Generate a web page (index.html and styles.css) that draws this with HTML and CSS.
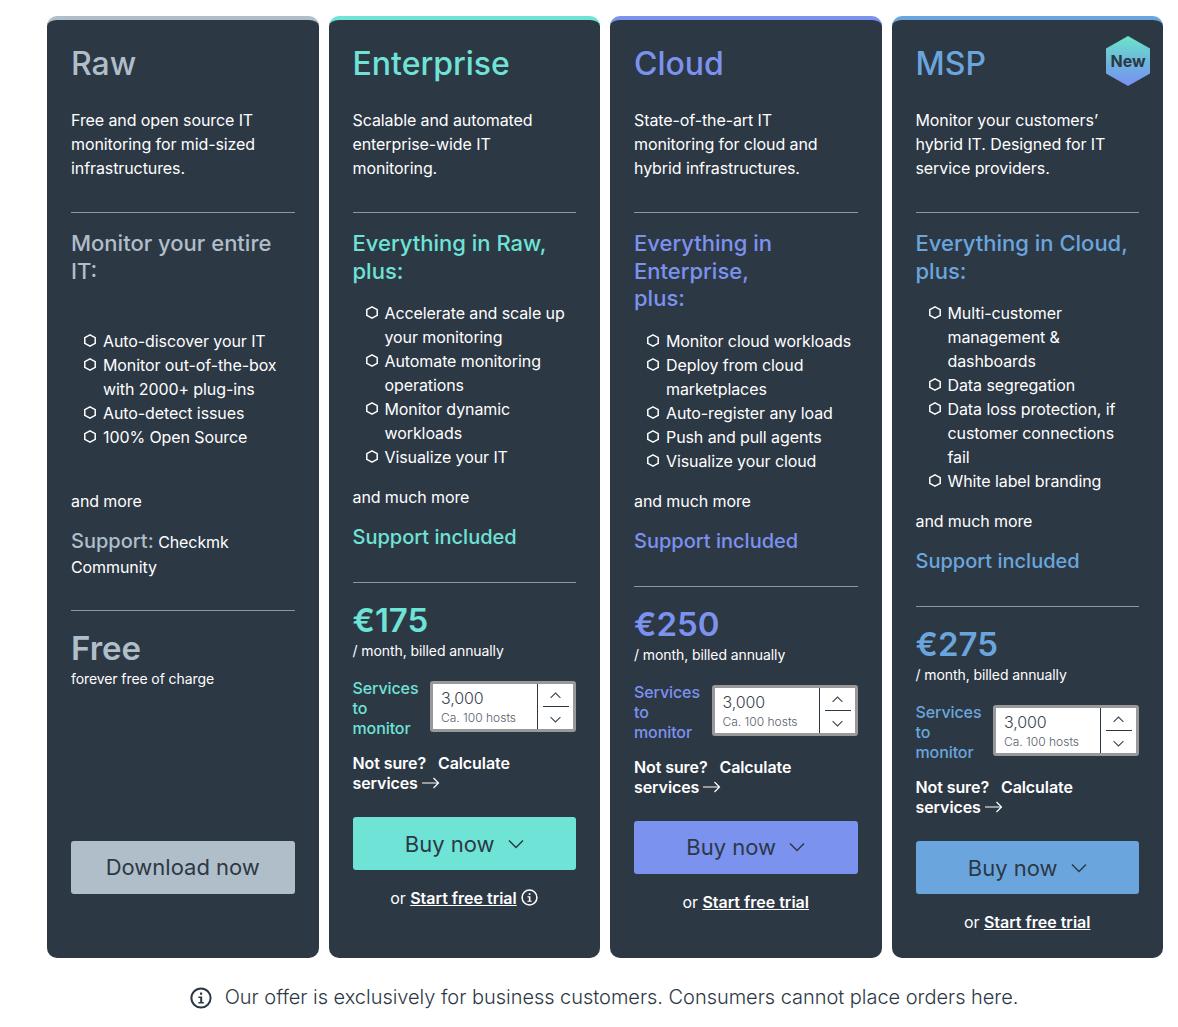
FILE: index.html
```html
<!DOCTYPE html>
<html lang="en">
<head>
    <meta charset="UTF-8">
    <meta name="viewport" content="width=device-width, initial-scale=1.0">
    <title>Checkmk pricing</title>
    <link rel="stylesheet" href="styles.css">
</head>
<body>
    <svg class="sprites" width="0" height="0" aria-hidden="true">
        <defs>
            <symbol id="hex" viewBox="0 0 12 13">
                <path d="M6 .8 11.2 3.6V9.4L6 12.2 .8 9.4V3.6Z" fill="none" stroke="currentColor" stroke-width="1.5" stroke-linejoin="round"/>
            </symbol>
            <symbol id="chev" viewBox="0 0 16 10">
                <path d="M1 1.5 8 8.5 15 1.5" fill="none" stroke="currentColor" stroke-width="1.5"/>
            </symbol>
            <symbol id="arrow" viewBox="0 0 18 12">
                <path d="M0 6H16.5M11.5 1 16.5 6 11.5 11" fill="none" stroke="currentColor" stroke-width="1.2"/>
            </symbol>
            <symbol id="info" viewBox="0 0 22 22">
                <circle cx="11" cy="11" r="9.6" fill="none" stroke="currentColor" stroke-width="2"/>
                <path d="M10 5.4h2.2v2.3h-2.2zM8.4 9.5h3.8v5.6h1.6v1.5H8.4v-1.5h1.8V11H8.4z" fill="currentColor"/>
            </symbol>
            <linearGradient id="newGrad" x1="0" y1="0" x2="0" y2="1">
                <stop offset="0" stop-color="#6ee3c8"/>
                <stop offset="0.55" stop-color="#6cb4de"/>
                <stop offset="1" stop-color="#7c8ff5"/>
            </linearGradient>
        </defs>
    </svg>

    <div class="plans">
        <!-- Raw -->
        <section class="card card-raw">
            <h2>Raw</h2>
            <p class="desc">Free and open source IT monitoring for mid-sized infrastructures.</p>
            <hr>
            <h3>Monitor your entire IT:<br><br></h3>
            <ul class="features features-raw">
                <li><svg class="hex"><use href="#hex"/></svg><span>Auto-discover your IT</span></li>
                <li><svg class="hex"><use href="#hex"/></svg><span>Monitor out-of-the-box with 2000+ plug-ins</span></li>
                <li><svg class="hex"><use href="#hex"/></svg><span>Auto-detect issues</span></li>
                <li><svg class="hex"><use href="#hex"/></svg><span>100% Open Source</span></li>
            </ul>
            <p class="more">and more</p>
            <p class="support"><strong>Support:</strong> Checkmk Community</p>
            <hr>
            <div class="price">Free</div>
            <div class="period">forever free of charge</div>
            <a class="btn btn-download" href="#">Download now</a>
        </section>

        <!-- Enterprise -->
        <section class="card card-enterprise">
            <h2>Enterprise</h2>
            <p class="desc">Scalable and automated enterprise-wide IT monitoring.</p>
            <hr>
            <h3>Everything in Raw, plus:</h3>
            <ul class="features">
                <li><svg class="hex"><use href="#hex"/></svg><span>Accelerate and scale up your monitoring</span></li>
                <li><svg class="hex"><use href="#hex"/></svg><span>Automate monitoring operations</span></li>
                <li><svg class="hex"><use href="#hex"/></svg><span>Monitor dynamic workloads</span></li>
                <li><svg class="hex"><use href="#hex"/></svg><span>Visualize your IT</span></li>
            </ul>
            <p class="more">and much more</p>
            <p class="support"><strong>Support included</strong></p>
            <hr>
            <div class="price">€175</div>
            <div class="period">/ month, billed annually</div>
            <div class="services">
                <label class="services-label">Services to monitor</label>
                <div class="stepper">
                    <div class="stepper-value">
                        <span class="stepper-num">3,000</span>
                        <span class="stepper-hint">Ca. 100 hosts</span>
                    </div>
                    <div class="stepper-btns">
                        <svg class="step-up"><use href="#chev"/></svg>
                        <svg class="step-down"><use href="#chev"/></svg>
                    </div>
                </div>
            </div>
            <p class="calc">Not sure? <a href="#">Calculate services <svg class="arrow"><use href="#arrow"/></svg></a></p>
            <a class="btn" href="#">Buy now <svg class="btn-chev"><use href="#chev"/></svg></a>
            <p class="trial">or <a href="#">Start free trial</a> <svg class="trial-info"><use href="#info"/></svg></p>
        </section>

        <!-- Cloud -->
        <section class="card card-cloud">
            <h2>Cloud</h2>
            <p class="desc">State-of-the-art IT monitoring for cloud and hybrid infrastructures.</p>
            <hr>
            <h3>Everything in Enterprise,<br>plus:</h3>
            <ul class="features">
                <li><svg class="hex"><use href="#hex"/></svg><span>Monitor cloud workloads</span></li>
                <li><svg class="hex"><use href="#hex"/></svg><span>Deploy from cloud marketplaces</span></li>
                <li><svg class="hex"><use href="#hex"/></svg><span>Auto-register any load</span></li>
                <li><svg class="hex"><use href="#hex"/></svg><span>Push and pull agents</span></li>
                <li><svg class="hex"><use href="#hex"/></svg><span>Visualize your cloud</span></li>
            </ul>
            <p class="more">and much more</p>
            <p class="support"><strong>Support included</strong></p>
            <hr>
            <div class="price">€250</div>
            <div class="period">/ month, billed annually</div>
            <div class="services">
                <label class="services-label">Services to monitor</label>
                <div class="stepper">
                    <div class="stepper-value">
                        <span class="stepper-num">3,000</span>
                        <span class="stepper-hint">Ca. 100 hosts</span>
                    </div>
                    <div class="stepper-btns">
                        <svg class="step-up"><use href="#chev"/></svg>
                        <svg class="step-down"><use href="#chev"/></svg>
                    </div>
                </div>
            </div>
            <p class="calc">Not sure? <a href="#">Calculate services <svg class="arrow"><use href="#arrow"/></svg></a></p>
            <a class="btn" href="#">Buy now <svg class="btn-chev"><use href="#chev"/></svg></a>
            <p class="trial">or <a href="#">Start free trial</a></p>
        </section>

        <!-- MSP -->
        <section class="card card-msp">
            <div class="badge">
                <svg class="badge-hex" viewBox="0 0 44 50"><path d="M22 0 44 12.5V37.5L22 50 0 37.5V12.5Z" fill="url(#newGrad)"/></svg>
                <span class="badge-text">New</span>
            </div>
            <h2>MSP</h2>
            <p class="desc">Monitor your customers’ hybrid IT. Designed for IT service providers.</p>
            <hr>
            <h3>Everything in Cloud, plus:</h3>
            <ul class="features">
                <li><svg class="hex"><use href="#hex"/></svg><span>Multi-customer management &amp; dashboards</span></li>
                <li><svg class="hex"><use href="#hex"/></svg><span>Data segregation</span></li>
                <li><svg class="hex"><use href="#hex"/></svg><span>Data loss protection, if customer connections fail</span></li>
                <li><svg class="hex"><use href="#hex"/></svg><span>White label branding</span></li>
            </ul>
            <p class="more">and much more</p>
            <p class="support"><strong>Support included</strong></p>
            <hr>
            <div class="price">€275</div>
            <div class="period">/ month, billed annually</div>
            <div class="services">
                <label class="services-label">Services to monitor</label>
                <div class="stepper">
                    <div class="stepper-value">
                        <span class="stepper-num">3,000</span>
                        <span class="stepper-hint">Ca. 100 hosts</span>
                    </div>
                    <div class="stepper-btns">
                        <svg class="step-up"><use href="#chev"/></svg>
                        <svg class="step-down"><use href="#chev"/></svg>
                    </div>
                </div>
            </div>
            <p class="calc">Not sure? <a href="#">Calculate services <svg class="arrow"><use href="#arrow"/></svg></a></p>
            <a class="btn" href="#">Buy now <svg class="btn-chev"><use href="#chev"/></svg></a>
            <p class="trial">or <a href="#">Start free trial</a></p>
        </section>
    </div>

    <p class="notice"><svg class="notice-info"><use href="#info"/></svg>Our offer is exclusively for business customers. Consumers cannot place orders here.</p>
</body>
</html>
```

FILE: styles.css
```css
* {
    box-sizing: border-box;
}

body {
    margin: 0;
    background: #fff;
    font-family: "Inter", "Liberation Sans", sans-serif;
    font-size: 16px;
    line-height: 24px;
    letter-spacing: -0.09px;
    color: #fff;
}

.sprites {
    position: absolute;
}

.plans {
    display: grid;
    grid-template-columns: repeat(4, 1fr);
    gap: 10px;
    padding: 16px 15px 0 47px;
}

.card {
    position: relative;
    display: flex;
    flex-direction: column;
    align-items: stretch;
    padding: 20px 24px 24px;
    background: #2d3845;
    border-top: 4px solid var(--accent);
    border-radius: 10px;
}

.card-raw { --accent: #b0bec9; }
.card-enterprise { --accent: #6ee3d6; }
.card-cloud { --accent: #7c92ef; }
.card-msp { --accent: #6aa6dd; }

h2 {
    margin: 0 0 20px;
    font-size: 32px;
    line-height: 48px;
    font-weight: 500;
    letter-spacing: 0;
    color: var(--accent);
}

.desc {
    margin: 0 0 32px;
    padding-right: 4px;
}

hr {
    width: 100%;
    height: 1px;
    margin: 0 0 17px;
    border: 0;
    background: #8f969e;
}

h3 {
    margin: 0 0 16px;
    font-size: 22px;
    line-height: 27.5px;
    font-weight: 500;
    letter-spacing: 0;
    color: var(--accent);
}

.features {
    margin: 0 0 16px;
    padding: 0 0 0 13px;
    list-style: none;
}

.features-raw {
    margin-bottom: 40px;
}

.features li {
    display: flex;
    gap: 7px;
}

.hex {
    flex: none;
    width: 12px;
    height: 13px;
    margin-top: 5px;
    color: #fff;
}

.more {
    margin: 0 0 15px;
}

.support {
    margin: 0 0 31px;
}

.support strong {
    font-size: 20px;
    line-height: 27px;
    font-weight: 500;
    letter-spacing: 0;
    color: var(--accent);
}

.price {
    font-size: 33px;
    line-height: 40px;
    font-weight: 600;
    letter-spacing: 0;
    color: var(--accent);
}

.period {
    font-size: 14px;
    line-height: 20px;
    margin-top: 1px;
}

.services {
    display: flex;
    align-items: flex-start;
    gap: 10px;
    margin-top: 17px;
}

.services-label {
    flex: 1;
    font-weight: 500;
    line-height: 20px;
    color: var(--accent);
}

.stepper {
    flex: none;
    display: flex;
    width: 146px;
    height: 51px;
    margin-top: 3px;
    background: #fff;
    border: 3px solid #999;
    border-radius: 3px;
    color: #3b4450;
}

.stepper-value {
    flex: 1;
    display: flex;
    flex-direction: column;
    padding: 2px 0 0 8px;
    border-right: 1px solid #2d3845;
}

.stepper-num {
    font-weight: 300;
    line-height: 24px;
}

.stepper-hint {
    font-size: 12px;
    line-height: 16px;
    font-weight: 300;
    letter-spacing: 0;
    color: #56616c;
}

.stepper-btns {
    position: relative;
    width: 35px;
    display: flex;
    flex-direction: column;
    align-items: center;
}

.step-up,
.step-down {
    width: 13px;
    height: 7px;
}

.step-up {
    transform: scaleY(-1);
    margin-top: 8px;
}

.step-down {
    margin-top: 17px;
}

/* line between the two step buttons */
.stepper-btns::after {
    content: "";
    position: absolute;
    left: 5px;
    right: 4px;
    top: 22px;
    height: 1px;
    background: #2d3845;
}

.calc {
    margin: 15px 0 24px;
    line-height: 20px;
    font-weight: 600;
}

.calc a {
    margin-left: 8px;
    color: #fff;
    text-decoration: none;
}

.arrow {
    width: 18px;
    height: 12px;
    color: #fff;
}

.btn {
    display: flex;
    align-items: center;
    justify-content: center;
    gap: 13px;
    height: 53px;
    background: var(--accent);
    border-radius: 3px;
    font-size: 22px;
    letter-spacing: 0;
    color: #2d3845;
    text-decoration: none;
}

.btn-download {
    margin-top: 152px;
}

.btn-chev {
    width: 16px;
    height: 10px;
    color: #2d3845;
}

.trial {
    margin: 16px 0 0;
    text-align: center;
}

.trial a {
    font-weight: 600;
    letter-spacing: 0;
    color: #fff;
}

.trial-info {
    width: 17px;
    height: 17px;
    vertical-align: -2px;
    color: #fff;
}

.badge {
    position: absolute;
    top: 16px;
    right: 13px;
    width: 44px;
    height: 50px;
    display: flex;
    align-items: center;
    justify-content: center;
}

.badge-hex {
    position: absolute;
    inset: 0;
    width: 44px;
    height: 50px;
}

.badge-text {
    position: relative;
    font-size: 16px;
    font-weight: 700;
    color: #2d3845;
}

.notice {
    display: flex;
    align-items: center;
    justify-content: center;
    gap: 13px;
    margin: 26px 0 0;
    padding-left: 30px;
    font-size: 20px;
    line-height: 27px;
    font-weight: 300;
    letter-spacing: -0.03px;
    color: #2d3845;
}

.notice-info {
    width: 22px;
    height: 22px;
    color: #2d3845;
}
```
